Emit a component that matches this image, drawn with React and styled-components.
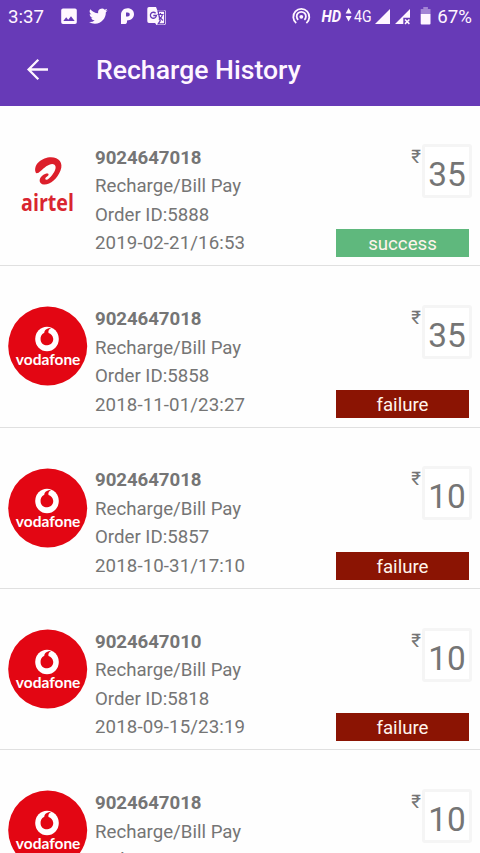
import React from 'react'
import styled, { createGlobalStyle } from 'styled-components'

const orders = [
  { phone: '9024647018', id: '5888', date: '2019-02-21/16:53', amount: 35, status: 'success', operator: 'airtel' },
  { phone: '9024647018', id: '5858', date: '2018-11-01/23:27', amount: 35, status: 'failure', operator: 'vodafone' },
  { phone: '9024647018', id: '5857', date: '2018-10-31/17:10', amount: 10, status: 'failure', operator: 'vodafone' },
  { phone: '9024647010', id: '5818', date: '2018-09-15/23:19', amount: 10, status: 'failure', operator: 'vodafone' },
  { phone: '9024647018', id: '5817', date: '2018-09-15/23:12', amount: 10, status: 'failure', operator: 'vodafone' },
]

const GlobalStyle = createGlobalStyle`
  * {
    box-sizing: border-box;
  }
  body {
    margin: 0;
    background: #fefefe;
    font-family: Roboto, 'Liberation Sans', sans-serif;
    overflow: hidden;
  }
`

const Screen = styled.div`
  width: 480px;
  height: 853px;
  display: flex;
  flex-direction: column;
  overflow: hidden;
`

const Header = styled.header`
  flex: none;
  height: 106.4px;
  background: #673ab7;
  color: #fff6ff;
`

const StatusBar = styled.div`
  height: 32px;
  display: flex;
  justify-content: space-between;
  padding: 0 8px;
  font-size: 18.67px;
  line-height: 34px;
`

const StatusGroup = styled.div`
  display: flex;
  white-space: nowrap;
`

const Time = styled.span`
  width: 50px;
`

const StatusIcons = styled.svg`
  display: block;
  width: ${(props) => props.$width}px;
  height: 32px;
  fill: currentColor;
`

const Toolbar = styled.div`
  height: 74px;
  display: flex;
  align-items: center;
  padding: 2px 26px 0;
`

const BackButton = styled.button`
  all: unset;
  width: 70px;
  height: 24px;
  cursor: pointer;
`

const Title = styled.h1`
  margin: 0;
  font-size: 26.6px;
  line-height: 32px;
  font-weight: 500;
`

const List = styled.ul`
  margin: 0;
  padding: 0;
  list-style: none;
`

const Row = styled.li`
  display: flex;
  align-items: flex-end;
  height: 161.33px;
  padding: 0 8px 7.6px;
  border-bottom: 1.4px solid #e0e0e0;
  &:first-child {
    height: 160px;
  }
`

const Logo = styled.svg`
  flex: none;
  width: 80px;
  height: 80px;
  margin-bottom: 32.8px;
`

const Details = styled.div`
  flex: 1;
  padding-left: 7px;
  font-size: 18.67px;
  line-height: 28.5px;
  color: #757575;
`

const Phone = styled.div`
  font-weight: 700;
  letter-spacing: -0.06px;
`

const OrderDate = styled.div`
  letter-spacing: 0.11px;
`

const Side = styled.div`
  width: 136px;
  height: 114px;
  display: flex;
  flex-direction: column;
  justify-content: space-between;
`

const Price = styled.div`
  display: flex;
  justify-content: flex-end;
  color: #757575;
`

const Rupee = styled.span`
  font-size: 18.67px;
  line-height: 27px;
  margin-right: 1px;
`

const Amount = styled.div`
  width: 50px;
  height: 54px;
  border: 3px solid #f5f5f5;
  border-radius: 3px;
  background: #fff;
  font-size: 33.33px;
  line-height: 56px;
  text-align: center;
`

const Badge = styled.div`
  width: 133px;
  height: 28px;
  margin-bottom: 0.7px;
  background: ${(props) => (props.$ok ? '#5fb87d' : '#8b1403')};
  color: #fff4ec;
  font-size: 18.67px;
  line-height: 30px;
  text-align: center;
`

const AirtelLogo = () => (
  <Logo viewBox="0 0 80 80">
    <path
      d="M27.5 27C25.5 19 34 12.5 43 12.3C51 12.3 55.5 18 52.5 25.5C49.5 33.5 42 40 36 39.6C30.5 39 30.5 33.5 34.5 30.5C38 28 41 28 40.5 30C40 31.5 36.5 32.5 37.5 34.3C38.5 36 42 33 44.2 30C47 26.5 49 22 46.5 19.8C43 17 36.5 22.5 33 25.7C30 28.5 28 29 27.5 27Z"
      fill="#dc1f2b"
    />
    <text
      x="13"
      y="65.5"
      fill="#d92530"
      fontFamily="'Open Sans', sans-serif"
      fontSize="23"
      fontWeight="700"
      textLength="53"
      lengthAdjust="spacingAndGlyphs"
    >
      airtel
    </text>
  </Logo>
)

const VodafoneLogo = () => (
  <Logo viewBox="0 0 80 80">
    <circle cx="39.7" cy="40" r="39.5" fill="#e30613" />
    <ellipse cx="39" cy="33" rx="11.8" ry="12.2" fill="#fff" />
    <path
      d="M42 22C38 22.5 36.3 24.8 36.3 26.8C33.3 28 32.2 31 32.6 34C33.1 37.6 36 39.5 39.3 39.3C43.2 39 45.6 36 45.2 32.5C44.8 29.5 43 27.7 40.5 27C40 25 41 23 43 22.3Z"
      fill="#e30613"
    />
    <text
      x="7.8"
      y="58.6"
      fill="#fff"
      fontFamily="Lato, sans-serif"
      fontSize="14.4"
      fontWeight="700"
      textLength="64.6"
      lengthAdjust="spacingAndGlyphs"
    >
      vodafone
    </text>
  </Logo>
)

const LeftIcons = () => (
  <StatusIcons $width={110} viewBox="58 0 110 32">
    <path
      fillRule="evenodd"
      d="M63 8.5h12a1.8 1.8 0 0 1 1.8 1.8v12a1.8 1.8 0 0 1-1.8 1.8H63a1.8 1.8 0 0 1-1.8-1.8v-12A1.8 1.8 0 0 1 63 8.5zM63.3 21h11.4l-3.7-4.8-2.8 3.5-2-2.4z"
    />
    <path
      transform="translate(89 6.8) scale(.78)"
      d="M23.95 4.57a10 10 0 0 1-2.83.77 4.96 4.96 0 0 0 2.17-2.72c-.95.55-2.01.96-3.13 1.18a4.92 4.92 0 0 0-8.38 4.48C7.69 8.1 4.07 6.13 1.64 3.16a4.92 4.92 0 0 0 1.52 6.57 4.9 4.9 0 0 1-2.23-.61v.06a4.92 4.92 0 0 0 3.95 4.83 5 5 0 0 1-2.21.08 4.94 4.94 0 0 0 4.6 3.42A9.87 9.87 0 0 1 0 19.54a13.99 13.99 0 0 0 7.56 2.21c9.05 0 14-7.5 14-13.98v-.64a9.94 9.94 0 0 0 2.39-2.56z"
    />
    <path
      fillRule="evenodd"
      d="M121 15c0-4 2.6-6.8 6.5-6.8 4 0 6.5 2.5 6.5 6 0 3.6-3 6.2-7 6.2v1.3c0 1.5-1 2.4-2.5 2.4H121zM127.8 12.5h-1.8v4h1.8a2 2 0 0 0 0-4z"
    />
    <path d="M149 7h7l1.2 3H164a2 2 0 0 1 2 2v11a2 2 0 0 1-2 2h-7.5l-1.4-2H149a1.7 1.7 0 0 1-1.7-1.7V8.7A1.7 1.7 0 0 1 149 7z" />
    <path
      d="M158 11h5.7a1 1 0 0 1 1 1v10.8a1 1 0 0 1-1 1h-5.5l2-3zM155.6 13.2a3 3 0 1 0 .8 2.3h-3.1"
      fill="none"
      stroke="#673ab7"
      strokeWidth="1.3"
    />
    <path d="M157.5 14.5h6M160.5 13v1.5M162.3 14.5c0 2-2 4-3.5 5M159 16.5l4 4" fill="none" stroke="#673ab7" strokeWidth="1.1" />
  </StatusIcons>
)

const RightIcons = () => (
  <StatusIcons $width={145} viewBox="292 0 145 32">
    <g fill="none" stroke="currentColor" strokeWidth="1.8">
      <path d="M296.2 23.1a8 8 0 1 1 10.2 0" />
      <path d="M298.2 19.8a4.6 4.6 0 1 1 6.2 0" />
    </g>
    <circle cx="301.3" cy="16.8" r="1.9" />
    <text x="321.5" y="22" fontSize="16" fontStyle="italic" fontWeight="700" textLength="19.5" lengthAdjust="spacingAndGlyphs">
      HD
    </text>
    <path d="M345.6 13.6h6L348.6 8zM345.6 16h6l-3 5.6z" />
    <text x="354" y="22.3" fontSize="17" textLength="17.5" lengthAdjust="spacingAndGlyphs">
      4G
    </text>
    <path d="M375 24h15V9z" />
    <path d="M395 24h8.3v-6.3h6.7V9z" />
    <path d="m405 19.5 4.4 4.4m0-4.4-4.4 4.4" stroke="currentColor" strokeWidth="1.5" />
    <path d="M423.3 7h4.6v2h2.6v5h-9.8V9h2.6z" opacity=".4" />
    <path d="M420.7 14h9.8v9.5a1 1 0 0 1-1 1h-7.8a1 1 0 0 1-1-1z" />
  </StatusIcons>
)

const Order = ({ order }) => (
  <Row>
    {order.operator === 'airtel' ? <AirtelLogo /> : <VodafoneLogo />}
    <Details>
      <Phone>{order.phone}</Phone>
      <div>Recharge/Bill Pay</div>
      <div>Order ID:{order.id}</div>
      <OrderDate>{order.date}</OrderDate>
    </Details>
    <Side>
      <Price>
        <Rupee>₹</Rupee>
        <Amount>{order.amount}</Amount>
      </Price>
      <Badge $ok={order.status === 'success'}>{order.status}</Badge>
    </Side>
  </Row>
)

const App = () => (
  <Screen>
    <GlobalStyle />
    <Header>
      <StatusBar>
        <StatusGroup>
          <Time>3:37</Time>
          <LeftIcons />
        </StatusGroup>
        <StatusGroup>
          <RightIcons />
          <span>67%</span>
        </StatusGroup>
      </StatusBar>
      <Toolbar>
        <BackButton type="button" aria-label="Back">
          <svg width="24" height="24" fill="none" stroke="currentColor" strokeWidth="2.3">
            <path d="M22 11.5H2.5M12.3 1.8 2.6 11.5l9.7 9.7" />
          </svg>
        </BackButton>
        <Title>Recharge History</Title>
      </Toolbar>
    </Header>
    <List>
      {orders.map((order) => (
        <Order order={order} key={order.id} />
      ))}
    </List>
  </Screen>
)

export default App
